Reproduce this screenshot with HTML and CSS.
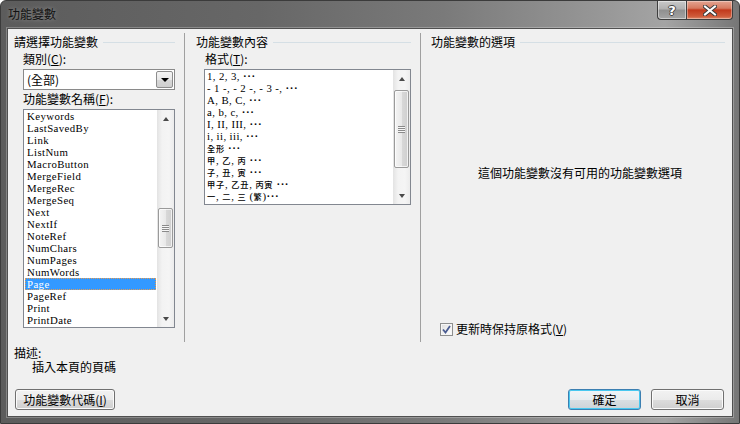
FILE: index.html
```html
<!DOCTYPE html>
<html lang="zh-Hant">
<head>
<meta charset="utf-8">
<title>功能變數</title>
<link rel="stylesheet" href="styles.css">
</head>
<body>
<div class="window">
  <div class="titlebar">
    <span class="title">功能變數</span>
    <div class="caption-btns">
      <div class="cap help">?</div>
      <div class="cap close">
        <svg width="14" height="11" viewBox="0 0 14 11"><path d="M2 1.5 L12 9.5 M12 1.5 L2 9.5" stroke="#3a3a3a" stroke-width="4" stroke-linecap="square"/><path d="M2 1.5 L12 9.5 M12 1.5 L2 9.5" stroke="#fff" stroke-width="2" stroke-linecap="square"/></svg>
      </div>
    </div>
  </div>
  <div class="client">
    <div class="columns">
      <section class="col col1">
        <div class="grp-head"><span>請選擇功能變數</span><i></i></div>
        <div class="field-label">類別(<u>C</u>):</div>
        <div class="combo"><span class="combo-text">(全部)</span><div class="combo-btn"><b class="tri-down"></b></div></div>
        <div class="field-label">功能變數名稱(<u>F</u>):</div>
        <div class="listbox lb-names">
          <div class="lb-items">
            <div class="row">Keywords</div>
            <div class="row">LastSavedBy</div>
            <div class="row">Link</div>
            <div class="row">ListNum</div>
            <div class="row">MacroButton</div>
            <div class="row">MergeField</div>
            <div class="row">MergeRec</div>
            <div class="row">MergeSeq</div>
            <div class="row">Next</div>
            <div class="row">NextIf</div>
            <div class="row">NoteRef</div>
            <div class="row">NumChars</div>
            <div class="row">NumPages</div>
            <div class="row">NumWords</div>
            <div class="row sel">Page</div>
            <div class="row">PageRef</div>
            <div class="row">Print</div>
            <div class="row">PrintDate</div>
          </div>
          <div class="vscroll">
            <div class="sb-arrow"><b class="tri-up"></b></div>
            <div class="sb-track"><div class="sb-thumb thumb-names"><b class="grip"></b></div></div>
            <div class="sb-arrow"><b class="tri-down small"></b></div>
          </div>
        </div>
      </section>
      <section class="col col2">
        <div class="grp-head"><span>功能變數內容</span><i></i></div>
        <div class="field-label">格式(<u>T</u>):</div>
        <div class="listbox lb-format">
          <div class="lb-items">
            <div class="row">1, 2, 3, <span class="dots">···</span></div>
            <div class="row">- 1 -, - 2 -, - 3 -, <span class="dots">···</span></div>
            <div class="row">A, B, C, <span class="dots">···</span></div>
            <div class="row">a, b, c, <span class="dots">···</span></div>
            <div class="row">I, II, III, <span class="dots">···</span></div>
            <div class="row">i, ii, iii, <span class="dots">···</span></div>
            <div class="row"><span class="cjk">全形</span> <span class="dots">···</span></div>
            <div class="row"><span class="cjk">甲</span>, <span class="cjk">乙</span>, <span class="cjk">丙</span> <span class="dots">···</span></div>
            <div class="row"><span class="cjk">子</span>, <span class="cjk">丑</span>, <span class="cjk">寅</span> <span class="dots">···</span></div>
            <div class="row"><span class="cjk">甲子</span>, <span class="cjk">乙丑</span>, <span class="cjk">丙寅</span> <span class="dots">···</span></div>
            <div class="row"><span class="cjk">一</span>, <span class="cjk">二</span>, <span class="cjk">三</span> (<span class="cjk">繁</span>)<span class="dots">···</span></div>
          </div>
          <div class="vscroll">
            <div class="sb-arrow"><b class="tri-up"></b></div>
            <div class="sb-track"><div class="sb-thumb thumb-format"><b class="grip"></b></div></div>
            <div class="sb-arrow"><b class="tri-down small"></b></div>
          </div>
        </div>
      </section>
      <section class="col col3">
        <div class="grp-head"><span>功能變數的選項</span><i></i></div>
        <div class="no-options">這個功能變數沒有可用的功能變數選項</div>
        <label class="check-row">
          <span class="checkbox"><svg width="9" height="9" viewBox="0 0 9 9"><path d="M1 4.5 L3.5 7.5 L8 1" fill="none" stroke="#4a5c91" stroke-width="1.8"/></svg></span>
          <span>更新時保持原格式(<u>V</u>)</span>
        </label>
      </section>
    </div>
    <div class="desc">
      <div class="desc-label">描述:</div>
      <div class="desc-text">插入本頁的頁碼</div>
    </div>
    <div class="buttons">
      <div class="btn btn-codes">功能變數代碼(<u>I</u>)</div>
      <div class="spacer"></div>
      <div class="btn btn-ok">確定</div>
      <div class="btn btn-cancel">取消</div>
    </div>
  </div>
</div>
</body>
</html>
```

FILE: styles.css
```css
* { box-sizing: border-box; margin: 0; padding: 0; }
html, body { width: 740px; height: 424px; overflow: hidden; background: #ffffff; }
body {
  font-family: "Noto Sans CJK TC", "Noto Sans", sans-serif;
  font-size: 12px;
  color: #000;
}
u { text-decoration: underline; text-underline-offset: 1px; }

.window {
  width: 740px;
  height: 424px;
  display: flex;
  flex-direction: column;
  border: 1px solid #3b3b3b;
  border-radius: 6px 6px 0 0;
  background: linear-gradient(to right, #5c5c5c 0%, #676767 35%, #7a7a7a 60%, #989898 82%, #a4a4a4 90%, #767676 100%);
}

.titlebar {
  height: 27px;
  display: flex;
  justify-content: space-between;
  align-items: flex-start;
}
.title {
  margin: 6px 0 0 7px;
  line-height: 14px;
  color: #111;
  text-shadow: 0 0 4px rgba(255,255,255,.35);
}
.caption-btns { display: flex; margin-right: 6px; }
.cap {
  height: 19px;
  display: flex;
  align-items: center;
  justify-content: center;
  border: 1px solid #3e3e3e;
  border-top: none;
}
.help {
  width: 29px;
  border-right: none;
  border-radius: 0 0 0 4px;
  background: linear-gradient(#c9c9c9 0%, #b0b0b0 45%, #8f8f8f 50%, #a4a4a4 100%);
  box-shadow: inset 0 0 0 1px rgba(255,255,255,.45);
  font-family: "DejaVu Sans", sans-serif;
  font-weight: bold;
  font-size: 13px;
  color: #fff;
  text-shadow: 1px 0 0 #444, -1px 0 0 #444, 0 1px 0 #444, 0 -1px 0 #444;
}
.close {
  width: 47px;
  border-radius: 0 0 4px 0;
  background: linear-gradient(#e4a592 0%, #d67a60 40%, #c2391c 50%, #cf5a3a 85%, #dd8a6a 100%);
  box-shadow: inset 0 0 0 1px rgba(255,255,255,.35);
}

.client {
  flex: 1;
  margin: 0 6px 6px 6px;
  background: #f0f0f0;
  border: 1px solid #505050;
  box-shadow: 0 0 0 1px rgba(255,255,255,.25);
  display: flex;
  flex-direction: column;
}

.columns {
  display: flex;
  margin-top: 4px;
  height: 309px;
}
.col { display: flex; flex-direction: column; }
.col1 { width: 177px; padding: 0 9px 0 6px; border-right: 1px solid #a0a0a0; }
.col2 { width: 236px; padding: 0 9px 0 11px; border-right: 1px solid #a0a0a0; }
.col3 { flex: 1; padding: 0 7px 0 10px; }

.grp-head {
  margin-top: 2px;
  height: 14px;
  line-height: 14px;
  display: flex;
  align-items: center;
}
.grp-head span { white-space: nowrap; }
.grp-head i { flex: 1; height: 1px; background: #d5dfe5; margin-left: 5px; }

.field-label {
  line-height: 14px;
  height: 14px;
  margin-top: 3px;
  margin-left: 9px;
}
.combo + .field-label { margin-top: 2px; }

.combo {
  margin-top: 3px;
  margin-left: 9px;
  height: 21px;
  border: 1px solid #8a8a8a;
  background: #fff;
  display: flex;
  align-items: center;
  justify-content: space-between;
  padding: 0 0 0 3px;
}
.combo-text { line-height: 14px; }
.combo-btn {
  width: 17px;
  height: 17px;
  margin-right: 1px;
  border: 1px solid #8d8d8d;
  border-radius: 2px;
  background: linear-gradient(#f4f4f4 0%, #e8e8e8 50%, #d8d8d8 51%, #cfcfcf 100%);
  display: flex;
  align-items: center;
  justify-content: center;
}
.tri-down {
  width: 0; height: 0;
  border-left: 4px solid transparent;
  border-right: 4px solid transparent;
  border-top: 4px solid #000;
}
.tri-down.small { border-top-color: #4a4a4a; border-left-width: 3.5px; border-right-width: 3.5px; border-top-width: 4px; }
.tri-up {
  width: 0; height: 0;
  border-left: 3.5px solid transparent;
  border-right: 3.5px solid transparent;
  border-bottom: 4px solid #4a4a4a;
}

.listbox {
  margin-top: 3px;
  margin-left: 9px;
  border: 1px solid #828790;
  background: #fff;
  display: flex;
}
.lb-names { height: 219px; }
.lb-format { margin-left: 8px; height: 136px; }

.lb-items {
  flex: 1;
  overflow: hidden;
  font-family: "Liberation Serif", serif;
  font-size: 10.8px;
  letter-spacing: 0.4px;
  line-height: 12px;
}
.row { height: 12px; padding-left: 3px; white-space: nowrap; }
.lb-format .row { padding-left: 2px; }
.dots { letter-spacing: 0.6px; font-weight: bold; }
.cjk {
  font-family: "Noto Sans CJK TC", sans-serif;
  font-size: 8.2px;
  font-weight: 500;
  letter-spacing: 0.8px;
  display: inline-block;
  height: 12px;
  line-height: 12px;
  vertical-align: top;
}
.row.sel {
  margin: 0 1px;
  padding-left: 1px;
  background: #3399ff;
  color: #fff;
  border: 1px dotted #e49b52;
  line-height: 10px;
}

.vscroll {
  width: 17px;
  display: flex;
  flex-direction: column;
  background: linear-gradient(to right, #e3e3e3 0%, #f3f3f3 30%, #f5f5f5 70%, #ececec 100%);
}
.sb-arrow {
  height: 17px;
  display: flex;
  align-items: center;
  justify-content: center;
}
.sb-track { flex: 1; display: flex; flex-direction: column; }
.sb-thumb {
  margin: 0 1px;
  border: 1px solid #9a9a9a;
  border-radius: 2px;
  background: linear-gradient(to right, #f4f4f4 0%, #e9e9e9 50%, #d8d8d8 55%, #cfcfcf 100%);
  box-shadow: inset 0 0 0 1px rgba(255,255,255,.7);
  display: flex;
  align-items: center;
  justify-content: center;
}
.thumb-names { margin-top: 81px; height: 40px; }
.thumb-format { margin-top: 3px; height: 78px; }
.grip {
  width: 7px;
  height: 7px;
  background: repeating-linear-gradient(#8a8a8a 0 1px, #f6f6f6 1px 2px);
}

.no-options {
  margin-top: 117px;
  line-height: 14px;
  text-align: center;
  padding-left: 4px;
}
.check-row {
  margin-top: 142px;
  margin-left: 9px;
  display: flex;
  align-items: center;
  gap: 3px;
  line-height: 14px;
}
.checkbox {
  width: 13px;
  height: 13px;
  border: 1px solid #8e8f8f;
  background: linear-gradient(135deg, #dcdcdc 0%, #f4f4f4 60%, #ffffff 100%);
  box-shadow: inset 0 0 0 1px #f6f6f6;
  display: flex;
  align-items: center;
  justify-content: center;
}

.desc { margin-top: 4px; line-height: 14px; }
.desc-label { padding-left: 6px; }
.desc-text { padding-left: 24px; }

.buttons {
  margin-top: 15px;
  display: flex;
  padding: 0 8px 0 7px;
  gap: 10px;
}
.spacer { flex: 1; }
.btn {
  height: 21px;
  border: 1px solid #707070;
  border-radius: 3px;
  background: linear-gradient(#f2f2f2 0%, #ebebeb 50%, #dddddd 51%, #cfcfcf 100%);
  box-shadow: inset 0 0 0 1px #fbfbfb;
  display: flex;
  align-items: center;
  justify-content: center;
  line-height: 14px;
  white-space: nowrap;
}
.btn-codes { width: 100px; }
.btn-ok {
  width: 73px;
  border-color: #3c7fb1;
  box-shadow: inset 0 0 0 1px #48c8f0;
  background: linear-gradient(#f0f4f7 0%, #e8edf0 50%, #d9dfe3 51%, #ccd3d8 100%);
}
.btn-cancel { width: 73px; }
```
